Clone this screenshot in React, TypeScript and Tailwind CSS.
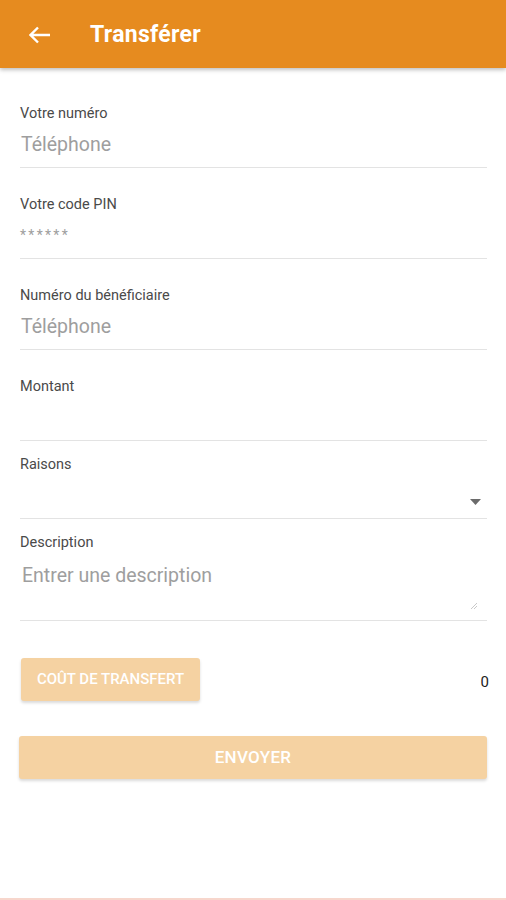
import React from "react";

function Field({ label, value, valueClass }: { label: string; value?: string; valueClass?: string }) {
    return (
        <div className="flex flex-col mb-[29px]">
            <div className="h-4 text-[14.5px] leading-4 text-[#4a4a4a]">{label}</div>
            <div className="h-[46px] flex items-center border-b border-[#e3e3e3]">
                <span className={valueClass ?? "text-[19.5px] text-[#9e9e9e] pl-[1px]"}>{value}</span>
            </div>
        </div>
    );
}

export default function App() {
    return (
        <div
            className="relative w-[506px] h-[900px] bg-white overflow-hidden"
            style={{ fontFamily: "Roboto, 'Liberation Sans', sans-serif" }}
        >
            <header className="h-[68px] bg-[#e68b1f] flex items-center shadow-[0_2px_4px_rgba(0,0,0,0.25)] relative z-10">
                <svg width="22" height="18" viewBox="0 0 22 18" className="ml-[29px] mt-[2px]">
                    <path d="M21 9H2M9 1.5L1.5 9L9 16.5" stroke="white" strokeWidth="2.4" fill="none" />
                </svg>
                <h1 className="ml-[39px] mt-[3px] text-[23px] font-bold text-white tracking-[0.3px]">Transférer</h1>
            </header>

            <main className="px-[20px] pt-[38px] flex flex-col">
                <div className="w-[467px]">
                    <Field label="Votre numéro" value="Téléphone" />
                    <Field label="Votre code PIN" value="******" valueClass="text-[14px] text-[#9e9e9e] tracking-[2.3px]" />
                    <Field label="Numéro du bénéficiaire" value="Téléphone" />
                    <div className="flex flex-col mb-[16px]">
                        <div className="h-4 text-[14.5px] leading-4 text-[#4a4a4a]">Montant</div>
                        <div className="h-[46px] border-b border-[#e3e3e3]" />
                    </div>
                    <div className="flex flex-col mb-[16px]">
                        <div className="h-4 text-[14.5px] leading-4 text-[#4a4a4a]">Raisons</div>
                        <div className="h-[46px] flex items-center justify-end border-b border-[#e3e3e3] pr-[6px]">
                            <svg width="11" height="6" viewBox="0 0 11 6" className="mt-[12px]">
                                <path d="M0 0H11L5.5 6Z" fill="#6b6b6b" />
                            </svg>
                        </div>
                    </div>
                    <div className="flex flex-col">
                        <div className="h-4 text-[14.5px] leading-4 text-[#4a4a4a]">Description</div>
                        <div className="relative h-[70px] border-b border-[#e3e3e3]">
                            <div className="pt-[10px] pl-[2px] text-[19.5px] text-[#9e9e9e]">Entrer une description</div>
                            <svg width="6" height="6" viewBox="0 0 6 6" className="absolute right-[10px] bottom-[11px]">
                                <path d="M6 0L0 6M6 3L3 6" stroke="#bbb" strokeWidth="0.8" />
                            </svg>
                        </div>
                    </div>
                </div>

                <div className="mt-[37px] flex items-center justify-between w-[468px]">
                    <button className="ml-[1px] h-[43px] w-[179px] rounded-[3px] bg-[#f5d2a2] text-white text-[15px] font-medium shadow-[0_2px_3px_rgba(0,0,0,0.15)]">
                        COÛT DE TRANSFERT
                    </button>
                    <span className="mt-[6px] text-[15px] text-[#222] mr-[-1px]">0</span>
                </div>

                <button className="mt-[35px] ml-[-1px] h-[43px] w-[468px] rounded-[3px] bg-[#f5d2a2] text-white text-[17px] font-medium tracking-[0.3px] shadow-[0_2px_3px_rgba(0,0,0,0.15)]">
                    ENVOYER
                </button>
            </main>

            <div className="absolute bottom-0 left-0 right-0 h-[2px] bg-[#f7d6cc]" />
        </div>
    );
}
